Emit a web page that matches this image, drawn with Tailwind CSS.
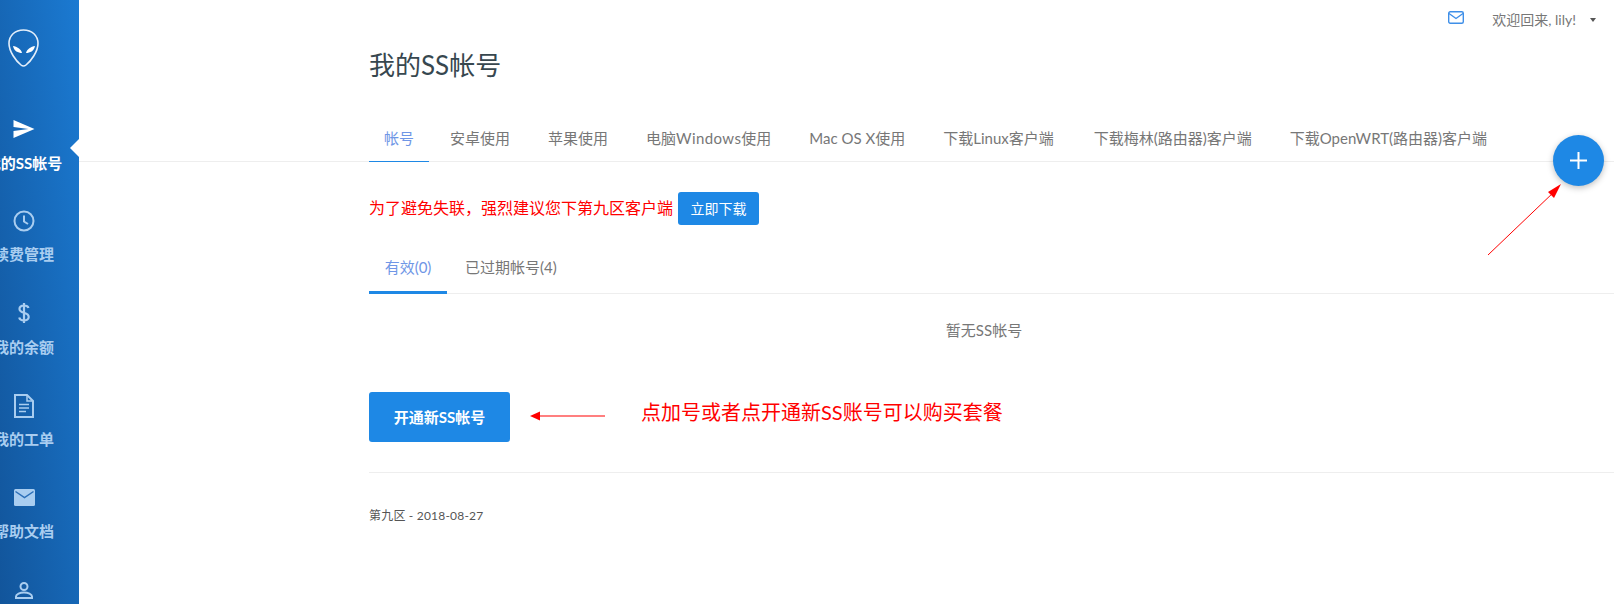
<!DOCTYPE html>
<html lang="zh-CN">
<head>
<meta charset="utf-8">
<script src="https://cdn.jsdelivr.net/npm/@tailwindcss/browser@4"></script>
<title>我的SS帐号</title>
</head>
<body class="bg-white overflow-hidden font-['Lato','Noto_Sans_CJK_SC',sans-serif]">
<div class="flex h-[604px] w-[1614px] overflow-hidden">
  <aside class="relative w-[79px] shrink-0 overflow-hidden bg-gradient-to-tr from-[#12559b] to-[#1b7ad2]">
    <div class="flex w-[48px] flex-col items-center text-[15px] font-bold text-[#a9cdf0]">
      <div class="flex h-[83px] w-full items-start justify-start pl-[8px] pt-[29px]">
        <svg class="shrink-0" width="31" height="38" viewBox="0 0 31 38"><path d="M15.5 1C7 1 1 6.500 1 14.500C1 22.500 8 32 13 36C14.500 37.200 16.500 37.200 18 36C23 32 30 22.500 30 14.500C30 6.500 24 1 15.500 1Z" fill="none" stroke="#e3eefa" stroke-width="1.600"/><path d="M5 17C9 17.500 13 20 14 24C10 24 6 22 5 17Z" fill="#fff"/><path d="M27 17C23 17.500 19 20 18 24C22 24 26 22 27 17Z" fill="#fff"/></svg>
      </div>
      <div class="flex h-[92px] flex-col items-center whitespace-nowrap text-white">
        <svg class="shrink-0 mt-[37px]" width="22" height="18" viewBox="2 3 21 18"><path d="M2.010 21L23 12 2.010 3 2 10l15 2-15 2z" fill="#fff"/></svg>
        <span class="mt-[15px] leading-[20px]">我的SS帐号</span>
      </div>
      <div class="flex h-[91px] flex-col items-center whitespace-nowrap">
        <svg class="shrink-0 mt-[35px]" width="22" height="22" viewBox="0 0 22 22" fill="none" stroke="#a9cdf0" stroke-width="2"><circle cx="11" cy="11" r="9.500"/><path d="M11 5.500V11.500L15 14"/></svg>
        <span class="mt-[12px] leading-[20px]">续费管理</span>
      </div>
      <div class="flex h-[92px] flex-col items-center whitespace-nowrap">
        <svg class="shrink-0 mt-[37px]" width="12" height="20" viewBox="0 0 12 20" fill="none" stroke="#a9cdf0" stroke-width="2.200"><path d="M6 0V20M10.500 5C10 3.300 8.300 2.500 6 2.500C3.500 2.500 1.500 3.800 1.500 6C1.500 8.300 3.500 9 6 9.800C8.700 10.600 10.700 11.500 10.700 14C10.700 16.200 8.500 17.500 6 17.500C3.500 17.500 1.700 16.500 1.200 14.500"/></svg>
        <span class="mt-[14px] leading-[20px]">我的余额</span>
      </div>
      <div class="flex h-[92px] flex-col items-center whitespace-nowrap">
        <svg class="shrink-0 mt-[36px]" width="20" height="24" viewBox="0 0 20 24" fill="none" stroke="#a9cdf0" stroke-width="2"><path d="M1 1H13L19 7V23H1Z"/><path d="M13 1V7H19" stroke-width="1.500"/><path d="M5 10.500H15M5 14H15M5 17.500H12" stroke-width="1.500"/></svg>
        <span class="mt-[11px] leading-[20px]">我的工单</span>
      </div>
      <div class="flex h-[92px] flex-col items-center whitespace-nowrap">
        <svg class="shrink-0 mt-[39px]" width="21" height="17" viewBox="0 0 21 17"><rect width="21" height="17" rx="1.500" fill="#a9cdf0"/><path d="M1.500 2.500L10.500 8.500L19.500 2.500" fill="none" stroke="#2c6fb8" stroke-width="1.500"/></svg>
        <span class="mt-[15px] leading-[20px]">帮助文档</span>
      </div>
      <div class="flex h-[62px] flex-col items-center">
        <svg class="shrink-0 mt-[40px]" width="18" height="17" viewBox="0 0 18 17" fill="none" stroke="#a9cdf0" stroke-width="2"><circle cx="9" cy="4.500" r="3.500"/><path d="M1 16V14.500C1 12 5 10.500 9 10.500C13 10.500 17 12 17 14.500V16Z"/></svg>
      </div>
    </div>
    <div class="absolute right-0 top-[139px] h-0 w-0 border-y-[9px] border-r-[9px] border-y-transparent border-r-white"></div>
  </aside>

  <main class="relative min-w-0 flex-1">
    <header class="flex h-[40px] items-start justify-end pr-[18px] pt-[11px] text-[14px] text-[#777]">
      <svg class="mr-[28px] shrink-0" width="16" height="13" viewBox="0 0 16 13" fill="none" stroke="#3f8fe8" stroke-width="1.400"><rect x="0.700" y="0.700" width="14.600" height="11.600" rx="1.500"/><path d="M1 2.500L8 7.500L15 2.500"/></svg>
      <span class="leading-[18px]">欢迎回来, lily!</span>
      <span class="ml-[14px] mt-[7px] h-0 w-0 border-x-[3.500px] border-t-[4px] border-x-transparent border-t-[#555]"></span>
    </header>

    <h1 class="pl-[290px] pt-[8px] text-[26px] leading-[34px] font-normal text-[#37474f]">我的SS帐号</h1>

    <nav class="mt-[38px] flex h-[42px] border-b border-[#eee] pl-[290px] text-[15px] text-[#777]">
      <a class="box-border h-[42px] w-[60px] border-b border-[#1e88e5] pt-[8px] text-center leading-[20px] text-[#6f96e6]">帐号</a>
      <a class="ml-[21px] pt-[8px] leading-[20px]">安卓使用</a>
      <a class="ml-[38px] pt-[8px] leading-[20px]">苹果使用</a>
      <a class="ml-[38px] pt-[8px] leading-[20px]"><span>电脑</span><span class="tracking-[0.4px]">Windows</span><span>使用</span></a>
      <a class="ml-[38px] pt-[8px] leading-[20px]">Mac OS X使用</a>
      <a class="ml-[38px] pt-[8px] leading-[20px]">下载Linux客户端</a>
      <a class="ml-[40px] pt-[8px] leading-[20px]">下载梅林(路由器)客户端</a>
      <a class="ml-[38px] pt-[8px] leading-[20px]">下载OpenWRT(路由器)客户端</a>
    </nav>

    <section class="pl-[290px]">
      <div class="mt-[30px] flex items-center">
        <span class="-mt-[3px] text-[16px] leading-[33px] text-[#ff0000]">为了避免失联，强烈建议您下第九区客户端</span>
        <a class="ml-[5px] flex h-[33px] w-[81px] items-center justify-center rounded-[3px] bg-[#1e88e5] text-[14px] text-white">立即下载</a>
      </div>

      <div class="mt-[25px] flex h-[44px] border-b border-[#eee] text-[15px] text-[#777]">
        <a class="box-border h-[44px] w-[78px] border-b-[3px] border-[#1e88e5] pt-[7px] text-center leading-[20px] text-[#6f96e6]">有效(0)</a>
        <a class="ml-[18px] pt-[7px] leading-[20px]">已过期帐号(4)</a>
      </div>

      <p class="mt-[26px] pr-[15px] text-center text-[15px] leading-[20px] text-[#777]">暂无SS帐号</p>

      <div class="mt-[52px] flex items-center">
        <a class="flex h-[50px] w-[141px] items-center justify-center rounded-[3px] bg-[#1e88e5] text-[15px] font-bold text-white">开通新SS帐号</a>
        <span class="ml-[131px] -mt-[11px] text-[20px] leading-[28px] text-[#ff0000]">点加号或者点开通新SS账号可以购买套餐</span>
      </div>

      <hr class="mt-[30px] border-[#eee]">
      <p class="mt-[34px] text-[12px] tracking-[0.2px] leading-[18px] text-[#555]">第九区 - 2018-08-27</p>
    </section>

    <button class="absolute left-[1474px] top-[135px] flex h-[51px] w-[51px] items-center justify-center rounded-full bg-[#1e88e5] shadow-[0_2px_6px_rgba(0,0,0,0.25)]">
      <svg width="19" height="19" viewBox="0 0 19 19" stroke="#fff" stroke-width="2"><path d="M9.500 1V18M1 9.500H18"/></svg>
    </button>

    <svg class="pointer-events-none absolute left-0 top-0" width="1535" height="604" viewBox="0 0 1535 604">
      <path d="M1409 255L1476 191" stroke="#ff0000" stroke-width="1" fill="none"/>
      <path d="M1482 184L1475 198L1469 192Z" fill="#ff0000"/>
      <path d="M460 416H526" stroke="#ff0000" stroke-width="1.200" fill="none"/>
      <path d="M451 416L461 411.500V420.500Z" fill="#ff0000"/>
    </svg>
  </main>
</div>
</body>
</html>
